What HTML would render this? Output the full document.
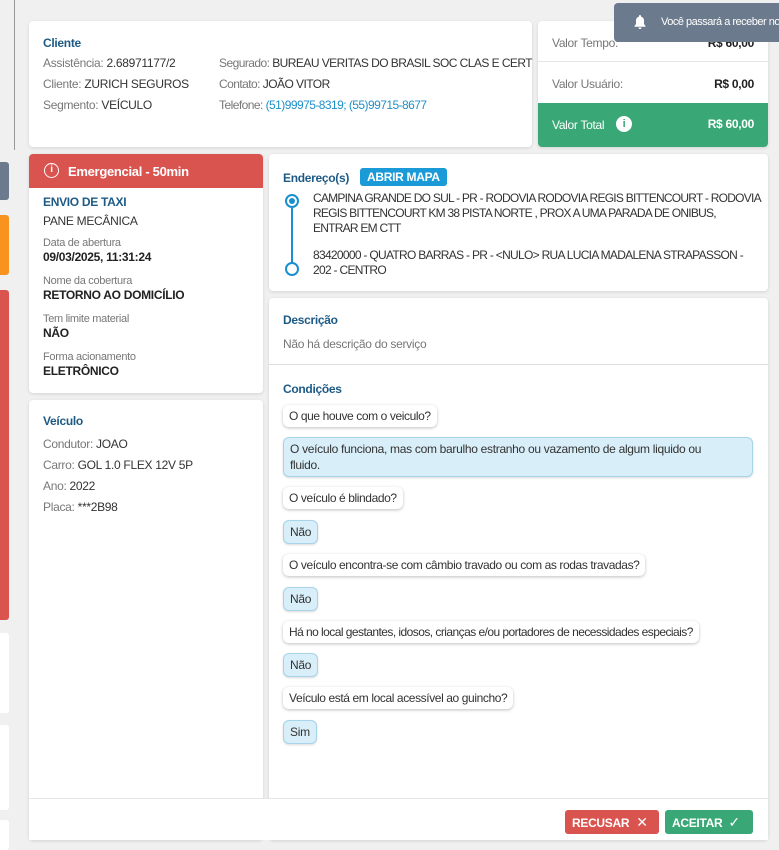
<!DOCTYPE html>
<html><head><meta charset="utf-8"><style>
*{box-sizing:border-box;margin:0;padding:0}
body{width:779px;height:840px;overflow:hidden;background:#f0f0f0;font-family:"Liberation Sans",sans-serif;font-size:12px;letter-spacing:-0.3px;color:#333;position:relative}
.a{position:absolute;white-space:nowrap}
.card{position:absolute;background:#fff;border-radius:4px;box-shadow:0 1px 3px rgba(0,0,0,.12)}
.h{color:#1d5b86;font-weight:bold;font-size:12px}
.g{color:#777}
.l{line-height:21px}
.blue{color:#1e90c8}
.q{position:absolute;left:283px;background:#fff;border-radius:6px;box-shadow:0 1px 3px rgba(0,0,0,.25);padding:3px 6px;line-height:16px;color:#333;white-space:nowrap;letter-spacing:-0.4px}
.ans{position:absolute;left:283px;background:#d8eef8;border:1px solid #a8d4ea;border-radius:6px;box-shadow:0 1px 2px rgba(0,0,0,.15);padding:3px 6px;line-height:16px;color:#333;white-space:nowrap}
.sm{font-size:11px;color:#777;line-height:14px}
.b{font-weight:bold;color:#222}
</style></head><body>
<div class="a" style="left:14px;top:0;width:1px;height:150px;background:#999"></div>
<div class="a" style="left:0;top:162px;width:9px;height:38px;background:#6b7a8c;border-radius:0 3px 3px 0"></div>
<div class="a" style="left:0;top:215px;width:9px;height:60px;background:#f7931e;border-radius:0 3px 3px 0"></div>
<div class="a" style="left:0;top:290px;width:9px;height:330px;background:#d9534f;border-radius:0 3px 3px 0"></div>
<div class="a" style="left:0;top:633px;width:9px;height:80px;background:#fff;border-radius:0 3px 3px 0"></div>
<div class="a" style="left:0;top:725px;width:9px;height:85px;background:#fff;border-radius:0 3px 3px 0"></div>
<div class="a" style="left:0;top:820px;width:9px;height:30px;background:#fff;border-radius:0 3px 3px 0"></div>

<div class="card" style="left:29px;top:21px;width:503px;height:126px">
 <div class="a h" style="left:14px;top:15px">Cliente</div>
 <div class="a l" style="left:14px;top:32px"><span class="g">Assistência:</span> 2.68971177/2<br><span class="g">Cliente:</span> ZURICH SEGUROS<br><span class="g">Segmento:</span> VEÍCULO</div>
 <div class="a l" style="left:190px;top:32px;letter-spacing:-0.55px"><span class="g">Segurado:</span> BUREAU VERITAS DO BRASIL SOC CLAS E CERT<br><span class="g">Contato:</span> JOÃO VITOR<br><span class="g">Telefone:</span> <span class="blue">(51)99975-8319; (55)99715-8677</span></div>
</div>

<div class="card" style="left:538px;top:21px;width:230px;height:126px;overflow:hidden">
 <div class="a g" style="left:14px;top:15px">Valor Tempo:</div><div class="a b" style="right:14px;top:15px">R$ 60,00</div>
 <div class="a" style="left:0;top:40px;width:100%;height:1px;background:#e6e6e6"></div>
 <div class="a g" style="left:14px;top:56px">Valor Usuário:</div><div class="a b" style="right:14px;top:56px">R$ 0,00</div>
 <div class="a" style="left:0;top:82px;width:100%;height:44px;background:#3aa876;color:#fff">
  <div class="a" style="left:14px;top:15px">Valor Total</div>
  <div class="a" style="left:78px;top:13px;width:16px;height:16px;border-radius:50%;background:#fff;color:#3aa876;font-weight:bold;font-size:11px;text-align:center;line-height:16px">i</div>
  <div class="a" style="right:14px;top:14px;font-weight:bold">R$ 60,00</div>
 </div>
</div>

<div class="a" style="left:614px;top:3px;width:170px;height:39px;background:#6b7a8c;border-radius:4px;color:#fff;font-size:11px;overflow:hidden">
 <svg class="a" style="left:19px;top:11px" width="14" height="16" viewBox="0 0 14 16"><path d="M7 1c-.6 0-1 .4-1 1v.6C4 3.1 3 4.7 3 6.5V10l-1.5 2v.8h11V12L11 10V6.5C11 4.7 10 3.1 8 2.6V2c0-.6-.4-1-1-1z M5.5 13.5a1.5 1.5 0 0 0 3 0z" fill="#fff"/></svg>
 <div class="a" style="left:47px;top:13px;letter-spacing:-0.5px">Você passará a receber no</div>
</div>

<div class="card" style="left:29px;top:154px;width:234px;height:239px;overflow:hidden">
 <div class="a" style="left:0;top:0;width:100%;height:34px;background:#d9534f;color:#fff;font-weight:bold;font-size:13px">
  <div class="a" style="left:15px;top:9px;width:15px;height:15px;border:1.5px solid #fff;border-radius:50%;font-size:10px;text-align:center;line-height:12px">i</div>
  <div class="a" style="left:39px;top:10px">Emergencial - 50min</div>
 </div>
 <div class="a h" style="left:14px;top:41px">ENVIO DE TAXI</div>
 <div class="a" style="left:14px;top:60px">PANE MECÂNICA</div>
 <div class="a sm" style="left:14px;top:82px">Data de abertura</div>
 <div class="a b" style="left:14px;top:96px">09/03/2025, 11:31:24</div>
 <div class="a sm" style="left:14px;top:120px">Nome da cobertura</div>
 <div class="a b" style="left:14px;top:134px">RETORNO AO DOMICÍLIO</div>
 <div class="a sm" style="left:14px;top:158px">Tem limite material</div>
 <div class="a b" style="left:14px;top:172px">NÃO</div>
 <div class="a sm" style="left:14px;top:196px">Forma acionamento</div>
 <div class="a b" style="left:14px;top:210px">ELETRÔNICO</div>
</div>

<div class="card" style="left:29px;top:400px;width:234px;height:440px">
 <div class="a h" style="left:14px;top:14px">Veículo</div>
 <div class="a l" style="left:14px;top:34px"><span class="g">Condutor:</span> JOAO<br><span class="g">Carro:</span> GOL 1.0 FLEX 12V 5P<br><span class="g">Ano:</span> 2022<br><span class="g">Placa:</span> ***2B98</div>
</div>

<div class="card" style="left:269px;top:154px;width:499px;height:137px">
 <div class="a h" style="left:14px;top:17px">Endereço(s)</div>
 <div class="a" style="left:91px;top:14px;background:#1a9ad6;color:#fff;font-weight:bold;padding:2px 7px;border-radius:3px">ABRIR MAPA</div>
 <div class="a" style="left:16px;top:40px;width:14px;height:14px;border:2px solid #1a8fd0;border-radius:50%"><div style="margin:2px;width:6px;height:6px;border-radius:50%;background:#1a8fd0"></div></div>
 <div class="a" style="left:22px;top:54px;width:2px;height:55px;background:#1a8fd0"></div>
 <div class="a" style="left:16px;top:108px;width:14px;height:14px;border:2px solid #1a8fd0;border-radius:50%"></div>
 <div class="a" style="left:44px;top:37px;line-height:15px;letter-spacing:-0.75px">CAMPINA GRANDE DO SUL - PR - RODOVIA RODOVIA REGIS BITTENCOURT - RODOVIA<br>REGIS BITTENCOURT KM 38 PISTA NORTE , PROX A UMA PARADA DE ONIBUS,<br>ENTRAR EM CTT</div>
 <div class="a" style="left:44px;top:94px;line-height:15px;letter-spacing:-0.7px">83420000 - QUATRO BARRAS - PR - &lt;NULO&gt; RUA LUCIA MADALENA STRAPASSON -<br>202 - CENTRO</div>
</div>

<div class="card" style="left:269px;top:298px;width:499px;height:542px">
 <div class="a h" style="left:14px;top:15px">Descrição</div>
 <div class="a g" style="left:14px;top:39px">Não há descrição do serviço</div>
 <div class="a" style="left:0;top:66px;width:100%;height:1px;background:#ddd"></div>
 <div class="a h" style="left:14px;top:84px">Condições</div>
</div>
<div class="q" style="top:405px">O que houve com o veiculo?</div>
<div class="ans" style="top:437px;width:470px">O veículo funciona, mas com barulho estranho ou vazamento de algum liquido ou<br>fluido.</div>
<div class="q" style="top:487px">O veículo é blindado?</div>
<div class="ans" style="top:520px">Não</div>
<div class="q" style="top:554px">O veículo encontra-se com câmbio travado ou com as rodas travadas?</div>
<div class="ans" style="top:587px">Não</div>
<div class="q" style="top:621px;letter-spacing:-0.55px">Há no local gestantes, idosos, crianças e/ou portadores de necessidades especiais?</div>
<div class="ans" style="top:653px">Não</div>
<div class="q" style="top:687px">Veículo está em local acessível ao guincho?</div>
<div class="ans" style="top:720px">Sim</div>

<div class="a" style="left:29px;top:798px;width:739px;height:42px;background:#fff;border-top:1px solid #e6e6e6"></div>
<div class="a" style="left:565px;top:810px;width:94px;height:24px;background:#d9534f;color:#fff;font-weight:bold;border-radius:3px;padding:5px 7px;line-height:14px">RECUSAR <span style="font-weight:normal;font-size:14px;margin-left:4px">✕</span></div>
<div class="a" style="left:665px;top:810px;width:88px;height:24px;background:#3aa876;color:#fff;font-weight:bold;border-radius:3px;padding:5px 7px;line-height:14px">ACEITAR <span style="font-weight:normal;font-size:14px;margin-left:3px">✓</span></div>
</body></html>
